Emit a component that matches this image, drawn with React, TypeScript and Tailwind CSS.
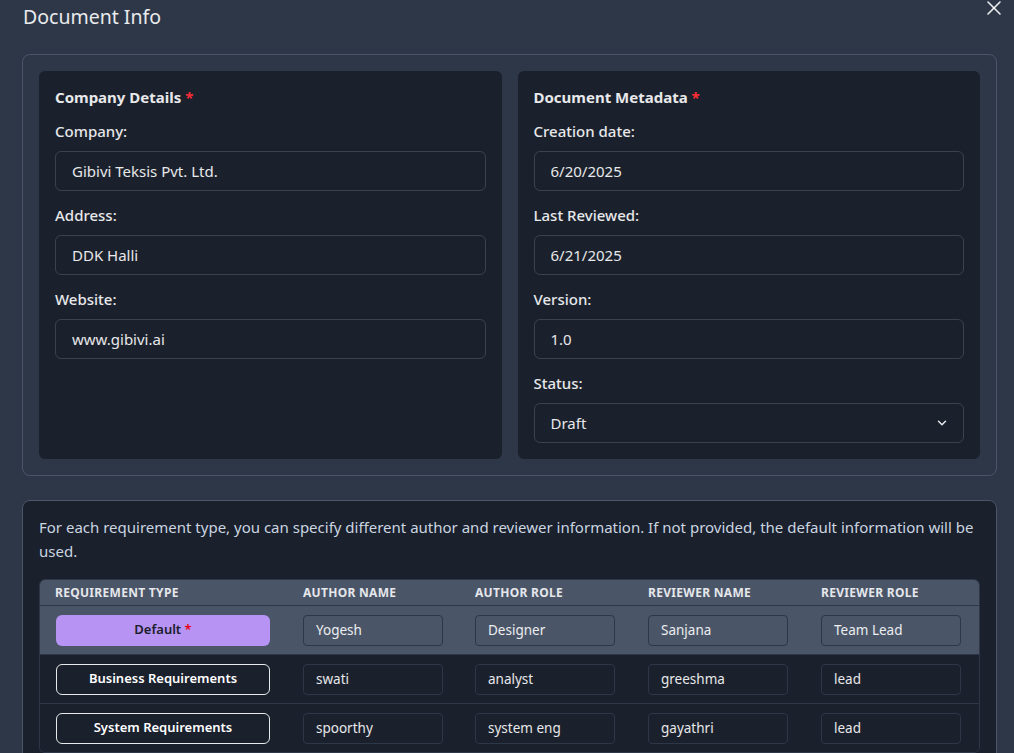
import React, { useState } from 'react'
import { X, ChevronDown } from 'lucide-react'

const companyFields = [
  { label: 'Company:', value: 'Gibivi Teksis Pvt. Ltd.' },
  { label: 'Address:', value: 'DDK Halli' },
  { label: 'Website:', value: 'www.gibivi.ai' },
]

const metaFields = [
  { label: 'Creation date:', value: '6/20/2025' },
  { label: 'Last Reviewed:', value: '6/21/2025' },
  { label: 'Version:', value: '1.0' },
]

const requirementRows = [
  { type: 'Default', authorName: 'Yogesh', authorRole: 'Designer', reviewerName: 'Sanjana', reviewerRole: 'Team Lead', isDefault: true },
  { type: 'Business Requirements', authorName: 'swati', authorRole: 'analyst', reviewerName: 'greeshma', reviewerRole: 'lead', isDefault: false },
  { type: 'System Requirements', authorName: 'spoorthy', authorRole: 'system eng', reviewerName: 'gayathri', reviewerRole: 'lead', isDefault: false },
]

function Field({ label, value }: { label: string; value: string }) {
  const [val, setVal] = useState(value)
  return (
    <div>
      <label className="block text-[15px] font-medium leading-6 mb-2 text-white/90">{label}</label>
      <input
        value={val}
        onChange={(e) => setVal(e.target.value)}
        className="w-full h-10 px-4 rounded-md border border-white/15 bg-transparent text-[15px] text-white/90 outline-none"
      />
    </div>
  )
}

function CellInput({ value, dark }: { value: string; dark: boolean }) {
  const [val, setVal] = useState(value)
  return (
    <input
      value={val}
      onChange={(e) => setVal(e.target.value)}
      className={`w-[140px] h-[31px] pl-3 rounded-sm border border-[#2d3748] text-[13.5px] text-white/90 outline-none ${dark ? 'bg-[#1a202c]' : 'bg-[#4a5568]'}`}
    />
  )
}

export default function App() {
  const [status, setStatus] = useState('Draft')

  return (
    <div className="relative min-h-screen bg-[#2d3748] pl-[22px] pr-[17px] pt-[3px] pb-6 text-white/90 font-['Noto_Sans',sans-serif]">
      {/* Header */}
      <h2 className="text-[19.5px] leading-7 pl-px">Document Info</h2>
      <button className="absolute top-[-4px] right-[8px] text-white/90">
        <X className="h-6 w-6" strokeWidth={1.6} />
      </button>

      {/* Company + metadata */}
      <div className="mt-[23px] border border-[#4a5568] rounded-lg p-4 grid grid-cols-2 gap-4">
        <div className="bg-[#1a202c] rounded-md p-4">
          <h3 className="text-[15px] font-bold leading-5 mb-3">
            Company Details <span className="text-red-500">*</span>
          </h3>
          <div className="flex flex-col gap-3">
            {companyFields.map((f) => (
              <Field key={f.label} label={f.label} value={f.value} />
            ))}
          </div>
        </div>

        <div className="bg-[#1a202c] rounded-md p-4">
          <h3 className="text-[15px] font-bold leading-5 mb-3">
            Document Metadata <span className="text-red-500">*</span>
          </h3>
          <div className="flex flex-col gap-3">
            {metaFields.map((f) => (
              <Field key={f.label} label={f.label} value={f.value} />
            ))}
            <div>
              <label className="block text-[15px] font-medium leading-6 mb-2 text-white/90">Status:</label>
              <div className="relative">
                <select
                  value={status}
                  onChange={(e) => setStatus(e.target.value)}
                  className="w-full h-10 px-4 rounded-md border border-white/15 bg-transparent text-[15px] text-white/90 outline-none appearance-none"
                >
                  <option className="bg-[#1a202c]">Draft</option>
                  <option className="bg-[#1a202c]">In Review</option>
                  <option className="bg-[#1a202c]">Approved</option>
                </select>
                <ChevronDown className="pointer-events-none absolute right-[15px] top-1/2 -translate-y-1/2 h-[14px] w-[14px]" strokeWidth={2.5} />
              </div>
            </div>
          </div>
        </div>
      </div>

      {/* Requirement type authors */}
      <div className="mt-6 bg-[#1a202c] border border-[#4a5568] rounded-lg px-4 pt-[14px] pb-4">
        <p className="text-[15px] leading-6 text-[#cbd5e0] mb-4">
          For each requirement type, you can specify different author and reviewer information. If not provided, the default information will be used.
        </p>

        <div className="border border-[#2d3748] rounded-md overflow-hidden">
          <div className="grid grid-cols-[247px_172px_173px_173px_1fr] h-[25px] items-center bg-[#4a5568] text-[12px] font-bold uppercase tracking-wide text-gray-200">
            <div className="pl-[15px] pr-4">Requirement Type</div>
            <div className="px-4">Author Name</div>
            <div className="px-4">Author Role</div>
            <div className="px-4">Reviewer Name</div>
            <div className="px-4">Reviewer Role</div>
          </div>
          {requirementRows.map((row) => (
            <div
              key={row.type}
              className={`grid grid-cols-[247px_172px_173px_173px_1fr] h-[49px] items-center border-t border-[#2d3748] ${row.isDefault ? 'bg-[#4a5568]' : 'bg-[#1a202c]'}`}
            >
              <div className="px-4">
                {row.isDefault ? (
                  <button className="w-[214px] h-[31px] rounded-md bg-[#b794f4] text-[13px] font-semibold text-[#1a202c]">
                    {row.type} <span className="text-red-600">*</span>
                  </button>
                ) : (
                  <button className="w-[214px] h-[31px] rounded-md border border-white/90 text-[13px] font-semibold text-white">
                    {row.type}
                  </button>
                )}
              </div>
              <div className="px-4"><CellInput value={row.authorName} dark={!row.isDefault} /></div>
              <div className="px-4"><CellInput value={row.authorRole} dark={!row.isDefault} /></div>
              <div className="px-4"><CellInput value={row.reviewerName} dark={!row.isDefault} /></div>
              <div className="px-4"><CellInput value={row.reviewerRole} dark={!row.isDefault} /></div>
            </div>
          ))}
        </div>
      </div>
    </div>
  )
}
